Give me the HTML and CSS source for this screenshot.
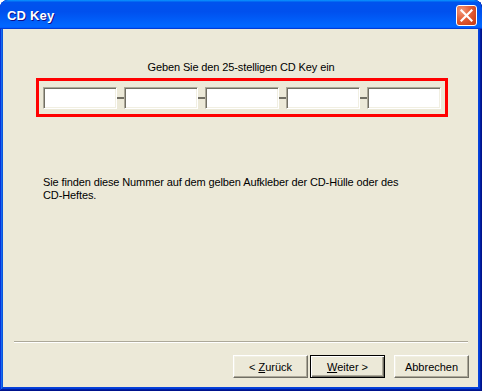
FILE: index.html
```html
<!DOCTYPE html>
<html lang="de">
<head>
  <meta charset="UTF-8" />
  <title>CD Key</title>
  <link rel="stylesheet" href="styles.css">
</head>
<body>

  <!-- DIALOG WINDOW -->
  <div class="window">
    <div class="title-bar">
      <span class="title-text">CD Key</span>
      <button class="close-btn" aria-label="Schließen">
        <svg width="13" height="13" viewBox="0 0 13 13" aria-hidden="true">
          <path d="M1.5 1.5 L11.5 11.5 M11.5 1.5 L1.5 11.5" stroke="#fff" stroke-width="2.2" stroke-linecap="square" />
        </svg>
      </button>
    </div>

    <div class="client">
      <p class="key-label">Geben Sie den 25-stelligen CD Key ein</p>

      <div class="key-box">
        <input type="text" class="key-input" maxlength="5" aria-label="Block 1" />
        <span class="dash"></span>
        <input type="text" class="key-input" maxlength="5" aria-label="Block 2" />
        <span class="dash"></span>
        <input type="text" class="key-input" maxlength="5" aria-label="Block 3" />
        <span class="dash"></span>
        <input type="text" class="key-input" maxlength="5" aria-label="Block 4" />
        <span class="dash"></span>
        <input type="text" class="key-input" maxlength="5" aria-label="Block 5" />
      </div>

      <p class="hint">Sie finden diese Nummer auf dem gelben Aufkleber der CD-Hülle oder des <span class="nowrap">CD-Heftes.</span></p>

      <div class="spacer"></div>

      <div class="separator"></div>

      <div class="buttons">
        <button class="btn btn-back">&lt; <u>Z</u>urück</button>
        <button class="btn btn-default"><u>W</u>eiter &gt;</button>
        <button class="btn btn-cancel">Abbrechen</button>
      </div>
    </div>
  </div>

</body>
</html>
```

FILE: styles.css
```css
* {
  box-sizing: border-box;
}

html, body {
  margin: 0;
  height: 100%;
  background: #fff;
  font-family: 'Liberation Sans', Arial, sans-serif;
  font-size: 11px;
  color: #000;
}

.window {
  width: 482px;
  height: 391px;
  display: flex;
  flex-direction: column;
  background: #0842d8;
  border-radius: 8px 8px 0 0;
  box-shadow: inset -1px -1px #00138c, inset 1px 1px #0831d9,
              inset -2px -2px #001ea0, inset 2px 2px #166aee,
              inset -3px -3px #003bda, inset 3px 3px #0855dd;
  overflow: hidden;
}

/* title bar */
.title-bar {
  height: 29px;
  display: flex;
  align-items: center;
  justify-content: space-between;
  padding: 0 5px 0 7px;
  background: linear-gradient(180deg, #0997ff, #0053ee 8%, #0050ee 40%, #0066ff 88%, #0066ff 93%, #005bff 95%, #003dd7 96%, #003dd7);
  border-radius: 8px 8px 0 0;
}

.title-text {
  color: #fff;
  font-weight: bold;
  font-size: 13px;
  letter-spacing: 0.2px;
  text-shadow: 1px 1px #0f1089;
  padding-top: 1px;
}

.close-btn {
  width: 21px;
  height: 21px;
  padding: 0;
  margin-top: 2px;
  display: flex;
  align-items: center;
  justify-content: center;
  border: 1px solid #fff;
  border-radius: 3px;
  background: radial-gradient(circle at 25% 25%, #f39a7a 0, #e4623c 40%, #d2461f 75%, #c23a16 100%);
  cursor: pointer;
}

/* client area */
.client {
  flex: 1;
  display: flex;
  flex-direction: column;
  margin: 0 4px 4px 3px;
  background: #ece9d8;
  letter-spacing: -0.12px;
}

.key-label {
  margin: 32px 0 4px;
  line-height: 13px;
  text-align: center;
  padding-left: 1px;
}

.key-box {
  display: flex;
  align-items: center;
  align-self: flex-start;
  margin-left: 33px;
  width: 412px;
  height: 39px;
  padding: 0 4px;
  border: 3px solid #ff0000;
}

.key-input {
  width: 74px;
  height: 22px;
  margin: 0;
  padding: 0 3px;
  font: inherit;
  background: #fff;
  border: 1px solid;
  border-color: #aca899 #fff #fff #aca899;
  box-shadow: inset 1px 1px #716f64, inset -1px -1px #f1efe2;
  outline: none;
}

.dash {
  width: 7px;
  height: 2px;
  background: #716f64;
}

.hint {
  margin: 59px 0 0 40px;
  width: 380px;
  line-height: 13px;
}

.nowrap {
  white-space: nowrap;
}

.spacer {
  flex: 1;
}

.separator {
  margin: 0 10px 0 11px;
  border-top: 1px solid #aca899;
  border-bottom: 1px solid #fff;
}

.buttons {
  display: flex;
  justify-content: flex-end;
  padding: 12px 9px 9px 0;
}

.btn {
  width: 75px;
  height: 23px;
  padding: 0;
  font: inherit;
  color: #000;
  background: #ece9d8;
  border: 1px solid;
  border-color: #fff #716f64 #716f64 #fff;
  box-shadow: inset -1px -1px #aca899, inset 1px 1px #f1efe2;
  cursor: pointer;
}

.btn u {
  text-decoration: underline;
}

.btn-back {
  margin-right: 2px;
}

.btn-default {
  border: 1px solid #000;
  box-shadow: inset 1px 1px #fff, inset -1px -1px #716f64, inset -2px -2px #aca899;
  margin-right: 9px;
}
```
